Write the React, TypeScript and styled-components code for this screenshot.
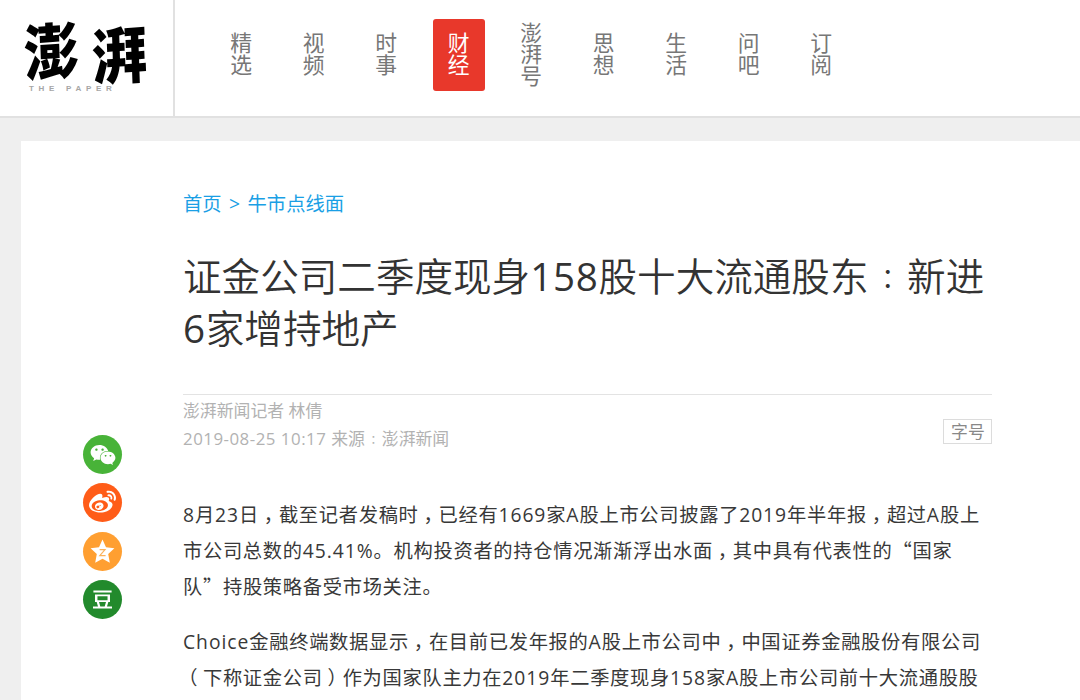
import { Fragment } from 'react';
import styled, { createGlobalStyle } from 'styled-components';
import { FaWeibo, FaWeixin } from 'react-icons/fa';
import { SiDouban } from 'react-icons/si';

const GlobalStyle = createGlobalStyle`
  * {
    box-sizing: border-box;
  }

  body {
    margin: 0;
    background: #efefef;
    color: #383838;
    font-family: 'Open Sans', 'Noto Sans CJK SC', sans-serif;
    overflow: hidden;
  }
`;

const Page = styled.div`
  height: 700px;
  overflow: hidden;
`;

const Header = styled.header`
  display: flex;
  height: 118px;
  background: #ffffff;
  border-bottom: 2px solid #e1e1e1;
`;

const Brand = styled.div`
  width: 175px;
  padding: 18px 0 0 24px;
  border-right: 2px solid #e1e1e1;
`;

const BrandMark = styled.div`
  display: flex;
  gap: 12px;
  height: 66px;
`;

const BrandGlyph = styled.span<{ $drop: number }>`
  width: 56px;
  font-family: 'Noto Sans CJK SC', sans-serif;
  font-size: 55px;
  font-weight: 900;
  line-height: 62px;
  color: #000000;
  transform: translateY(${(p) => p.$drop}px) skew(2deg, -4deg) scaleY(1.12);
`;

const BrandName = styled.div`
  padding-left: 5px;
  font-family: 'Liberation Sans', sans-serif;
  font-size: 8px;
  font-weight: 700;
  line-height: 10px;
  letter-spacing: 4.7px;
  white-space: nowrap;
  color: #a6a6a6;
`;

const Nav = styled.nav`
  display: flex;
  gap: 20px;
  padding: 19px 0 0 40px;
`;

const NavItem = styled.a<{ $active?: boolean }>`
  display: flex;
  align-items: center;
  justify-content: center;
  width: 52.5px;
  height: 72px;
  padding-bottom: 2px;
  border-radius: 3px;
  background: ${(p) => (p.$active ? '#e8382b' : 'transparent')};
  color: ${(p) => (p.$active ? '#ffffff' : '#777777')};

  span {
    width: 22px;
    font-size: 21.8px;
    line-height: 21.6px;
    word-break: break-all;
  }
`;

const Card = styled.main`
  display: flex;
  height: 600px;
  margin: 23px 0 0 21px;
  padding-left: 62px;
  background: #ffffff;
`;

const ShareRail = styled.aside`
  display: flex;
  flex-direction: column;
  gap: 9.4px;
  width: 100px;
  padding-top: 294px;
`;

const ShareButton = styled.a<{ $color: string }>`
  display: flex;
  align-items: center;
  justify-content: center;
  width: 39px;
  height: 39px;
  border-radius: 50%;
  background: ${(p) => p.$color};
  color: #ffffff;
`;

const Article = styled.article`
  width: 809.4px;
  padding-top: 49px;
`;

const Breadcrumb = styled.div`
  display: flex;
  gap: 7.5px;
  height: 28px;
  font-size: 19.3px;
  line-height: 28px;
  color: #1a9fe5;
`;

const Title = styled.h1`
  margin: 33px 0 0;
  height: 143px;
  font-size: 38.6px;
  font-weight: 350;
  line-height: 51.5px;
  white-space: nowrap;
  color: #333333;
`;

const Digits = styled.span`
  font-weight: 400;
  letter-spacing: 0.7px;
`;

const Meta = styled.div`
  display: flex;
  justify-content: space-between;
  align-items: flex-start;
  height: 103px;
  padding-top: 2px;
  border-top: 1px solid #e3e3e3;
  font-size: 16.87px;
  line-height: 27.5px;
  color: #b2b2b2;
`;

const PublishTime = styled.span`
  letter-spacing: 0.5px;
`;

const FontSize = styled.button`
  width: 49px;
  height: 25px;
  margin-top: 22px;
  padding: 0;
  border: 1px solid #dcdcdc;
  background: #ffffff;
  font-family: inherit;
  font-size: 16.87px;
  line-height: 21px;
  color: #888888;
`;

const Paragraph = styled.p`
  margin: 0 0 19px;
  font-size: 19.28px;
  line-height: 36px;
  letter-spacing: 0.69px;
  white-space: nowrap;
`;

const Latin = styled.span`
  letter-spacing: 0.97px;
`;

// half-width form with even padding, so the mark is centred in its em box
const Mark = styled.span`
  padding: 0 0.25em;
  font-feature-settings: 'halt';
`;

// tighter dots, still one em of the surrounding text wide
const Colon = styled.span`
  padding: 0 0.214em;
  font-family: 'Noto Sans CJK TC', sans-serif;
  font-size: 0.7em;
  line-height: 0;
  vertical-align: 0.08em;
`;

const Quote = styled.span`
  font-family: 'Noto Sans CJK SC', sans-serif;
  line-height: 0;
`;

const navItems = ['精选', '视频', '时事', '财经', '澎湃号', '思想', '生活', '问吧', '订阅'];

const paragraphs = [
  [
    '8月23日，截至记者发稿时，已经有1669家A股上市公司披露了2019年半年报，超过A股上',
    '市公司总数的45.41%。机构投资者的持仓情况渐渐浮出水面，其中具有代表性的“国家',
    '队”持股策略备受市场关注。',
  ],
  [
    'Choice金融终端数据显示，在目前已发年报的A股上市公司中，中国证券金融股份有限公司',
    '（下称证金公司）作为国家队主力在2019年二季度现身158家A股上市公司前十大流通股股',
  ],
];

const renderLine = (line: string) =>
  line.split(/([，（）“”]|[A-Za-z0-9.%]+)/).map((part, i) => {
    if (/^[，（）]$/.test(part)) return <Mark key={i}>{part}</Mark>;
    if (/^[“”]$/.test(part)) return <Quote key={i}>{part}</Quote>;
    if (/^[A-Za-z0-9.%]+$/.test(part)) return <Latin key={i}>{part}</Latin>;
    return part;
  });

const StarIcon = () => (
  <svg width="25" height="25" viewBox="0 0 25 25">
    <path
      d="M12.5 0.5 16 8.2 24.4 9.2 18.2 15 19.8 23.8 12.5 19.8 5.2 23.8 6.8 15 0.6 9.2 9 8.2Z"
      fill="#ffffff"
    />
    <path d="M9.6 10.6H15L9.8 16.6H15.6" fill="none" stroke="#fbb25c" strokeWidth="1.2" />
  </svg>
);

export const App = () => {
  return (
    <Page lang="zh-CN">
      <GlobalStyle />
      <Header>
        <Brand>
          <BrandMark>
            <BrandGlyph $drop={-1}>澎</BrandGlyph>
            <BrandGlyph $drop={3}>湃</BrandGlyph>
          </BrandMark>
          <BrandName>THE PAPER</BrandName>
        </Brand>
        <Nav>
          {navItems.map((item) => (
            <NavItem key={item} $active={item === '财经'}>
              <span>{item}</span>
            </NavItem>
          ))}
        </Nav>
      </Header>

      <Card>
        <ShareRail>
          <ShareButton $color="#48b338">
            <FaWeixin size={26} />
          </ShareButton>
          <ShareButton $color="#ff5c18">
            <FaWeibo size={27} />
          </ShareButton>
          <ShareButton $color="#ff9f31">
            <StarIcon />
          </ShareButton>
          <ShareButton $color="#228a2c">
            <SiDouban size={19} />
          </ShareButton>
        </ShareRail>

        <Article>
          <Breadcrumb>
            <span>首页</span>
            <span>&gt;</span>
            <span>牛市点线面</span>
          </Breadcrumb>
          <Title>
            证金公司二季度现身<Digits>158</Digits>股十大流通股东<Colon lang="zh-TW">：</Colon>新进
            <br />
            <Digits>6</Digits>家增持地产
          </Title>
          <Meta>
            <div>
              澎湃新闻记者 林倩
              <br />
              <PublishTime>2019-08-25 10:17 </PublishTime>
              来源<Colon lang="zh-TW">：</Colon>澎湃新闻
            </div>
            <FontSize>字号</FontSize>
          </Meta>
          {paragraphs.map((lines) => (
            <Paragraph key={lines[0]}>
              {lines.map((line) => (
                <Fragment key={line}>
                  {renderLine(line)}
                  <br />
                </Fragment>
              ))}
            </Paragraph>
          ))}
        </Article>
      </Card>
    </Page>
  );
};

export default App;
